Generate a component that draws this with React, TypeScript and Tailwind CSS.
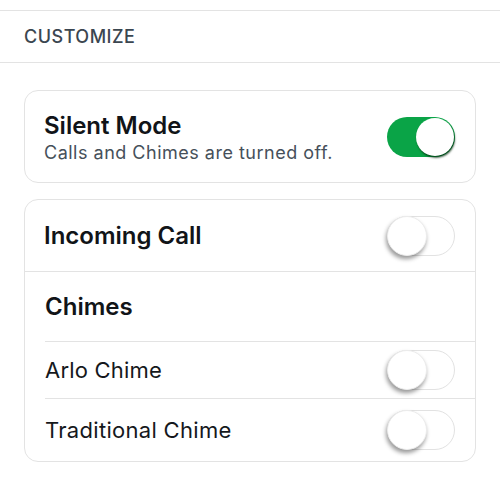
// Customize settings panel: silent mode card and call/chime toggles.

type ToggleProps = {
  on?: boolean;
};

function Toggle({ on = false }: ToggleProps) {
  if (on) {
    return (
      <div className="relative w-[68px] h-[40px] rounded-full bg-[#0aa447] shrink-0">
        <div className="absolute right-[1px] top-[1px] w-[38px] h-[38px] rounded-full bg-white shadow-[1px_2px_2px_rgba(0,40,10,0.7)]" />
      </div>
    );
  }
  return (
    <div className="relative w-[68px] h-[40px] rounded-full border border-[#e2e2e2] bg-white shrink-0">
      <div className="absolute left-[-1px] top-[-1px] w-[40px] h-[40px] rounded-full bg-white border border-[#ececec] shadow-[-1px_3px_4px_rgba(0,0,0,0.4)]" />
    </div>
  );
}

export default function App() {
  return (
    <div
      className="w-[500px] h-[500px] bg-white overflow-hidden"
      style={{ fontFamily: "Inter, 'Liberation Sans', sans-serif" }}
    >
      {/* Section header */}
      <div className="mt-[10px] h-[53px] border-y border-[#e3e3e3] flex items-center pl-[24px]">
        <span className="text-[18px] font-medium tracking-[0.5px] text-[#3b4650]">
          CUSTOMIZE
        </span>
      </div>

      {/* Silent mode */}
      <div className="mx-[24px] mt-[27px] h-[93px] rounded-[14px] border border-[#e3e3e3] flex items-center justify-between pl-[19px] pr-[20px]">
        <div className="flex flex-col pt-[2px]">
          <span className="text-[24px] leading-[30px] font-semibold text-[#111418]">
            Silent Mode
          </span>
          <span className="text-[18px] leading-[24px] tracking-[0.5px] text-[#46505a]">
            Calls and Chimes are turned off.
          </span>
        </div>
        <Toggle on />
      </div>

      {/* Calls and chimes */}
      <div className="mx-[24px] mt-[16px] rounded-[14px] border border-[#e3e3e3]">
        <div className="h-[72px] border-b border-[#e3e3e3] flex items-center justify-between pl-[19px] pr-[20px]">
          <span className="text-[24px] font-semibold text-[#111418]">
            Incoming Call
          </span>
          <Toggle />
        </div>
        <div className="ml-[20px]">
          <div className="h-[70px] border-b border-[#e3e3e3] flex items-center">
            <span className="text-[24px] font-semibold text-[#111418]">Chimes</span>
          </div>
          <div className="h-[57px] border-b border-[#e3e3e3] flex items-center justify-between pr-[20px]">
            <span className="text-[22px] tracking-[0.2px] text-[#15181c]">Arlo Chime</span>
            <Toggle />
          </div>
          <div className="h-[62px] flex items-center justify-between pr-[20px]">
            <span className="text-[22px] tracking-[0.3px] text-[#15181c]">Traditional Chime</span>
            <Toggle />
          </div>
        </div>
      </div>
    </div>
  );
}
